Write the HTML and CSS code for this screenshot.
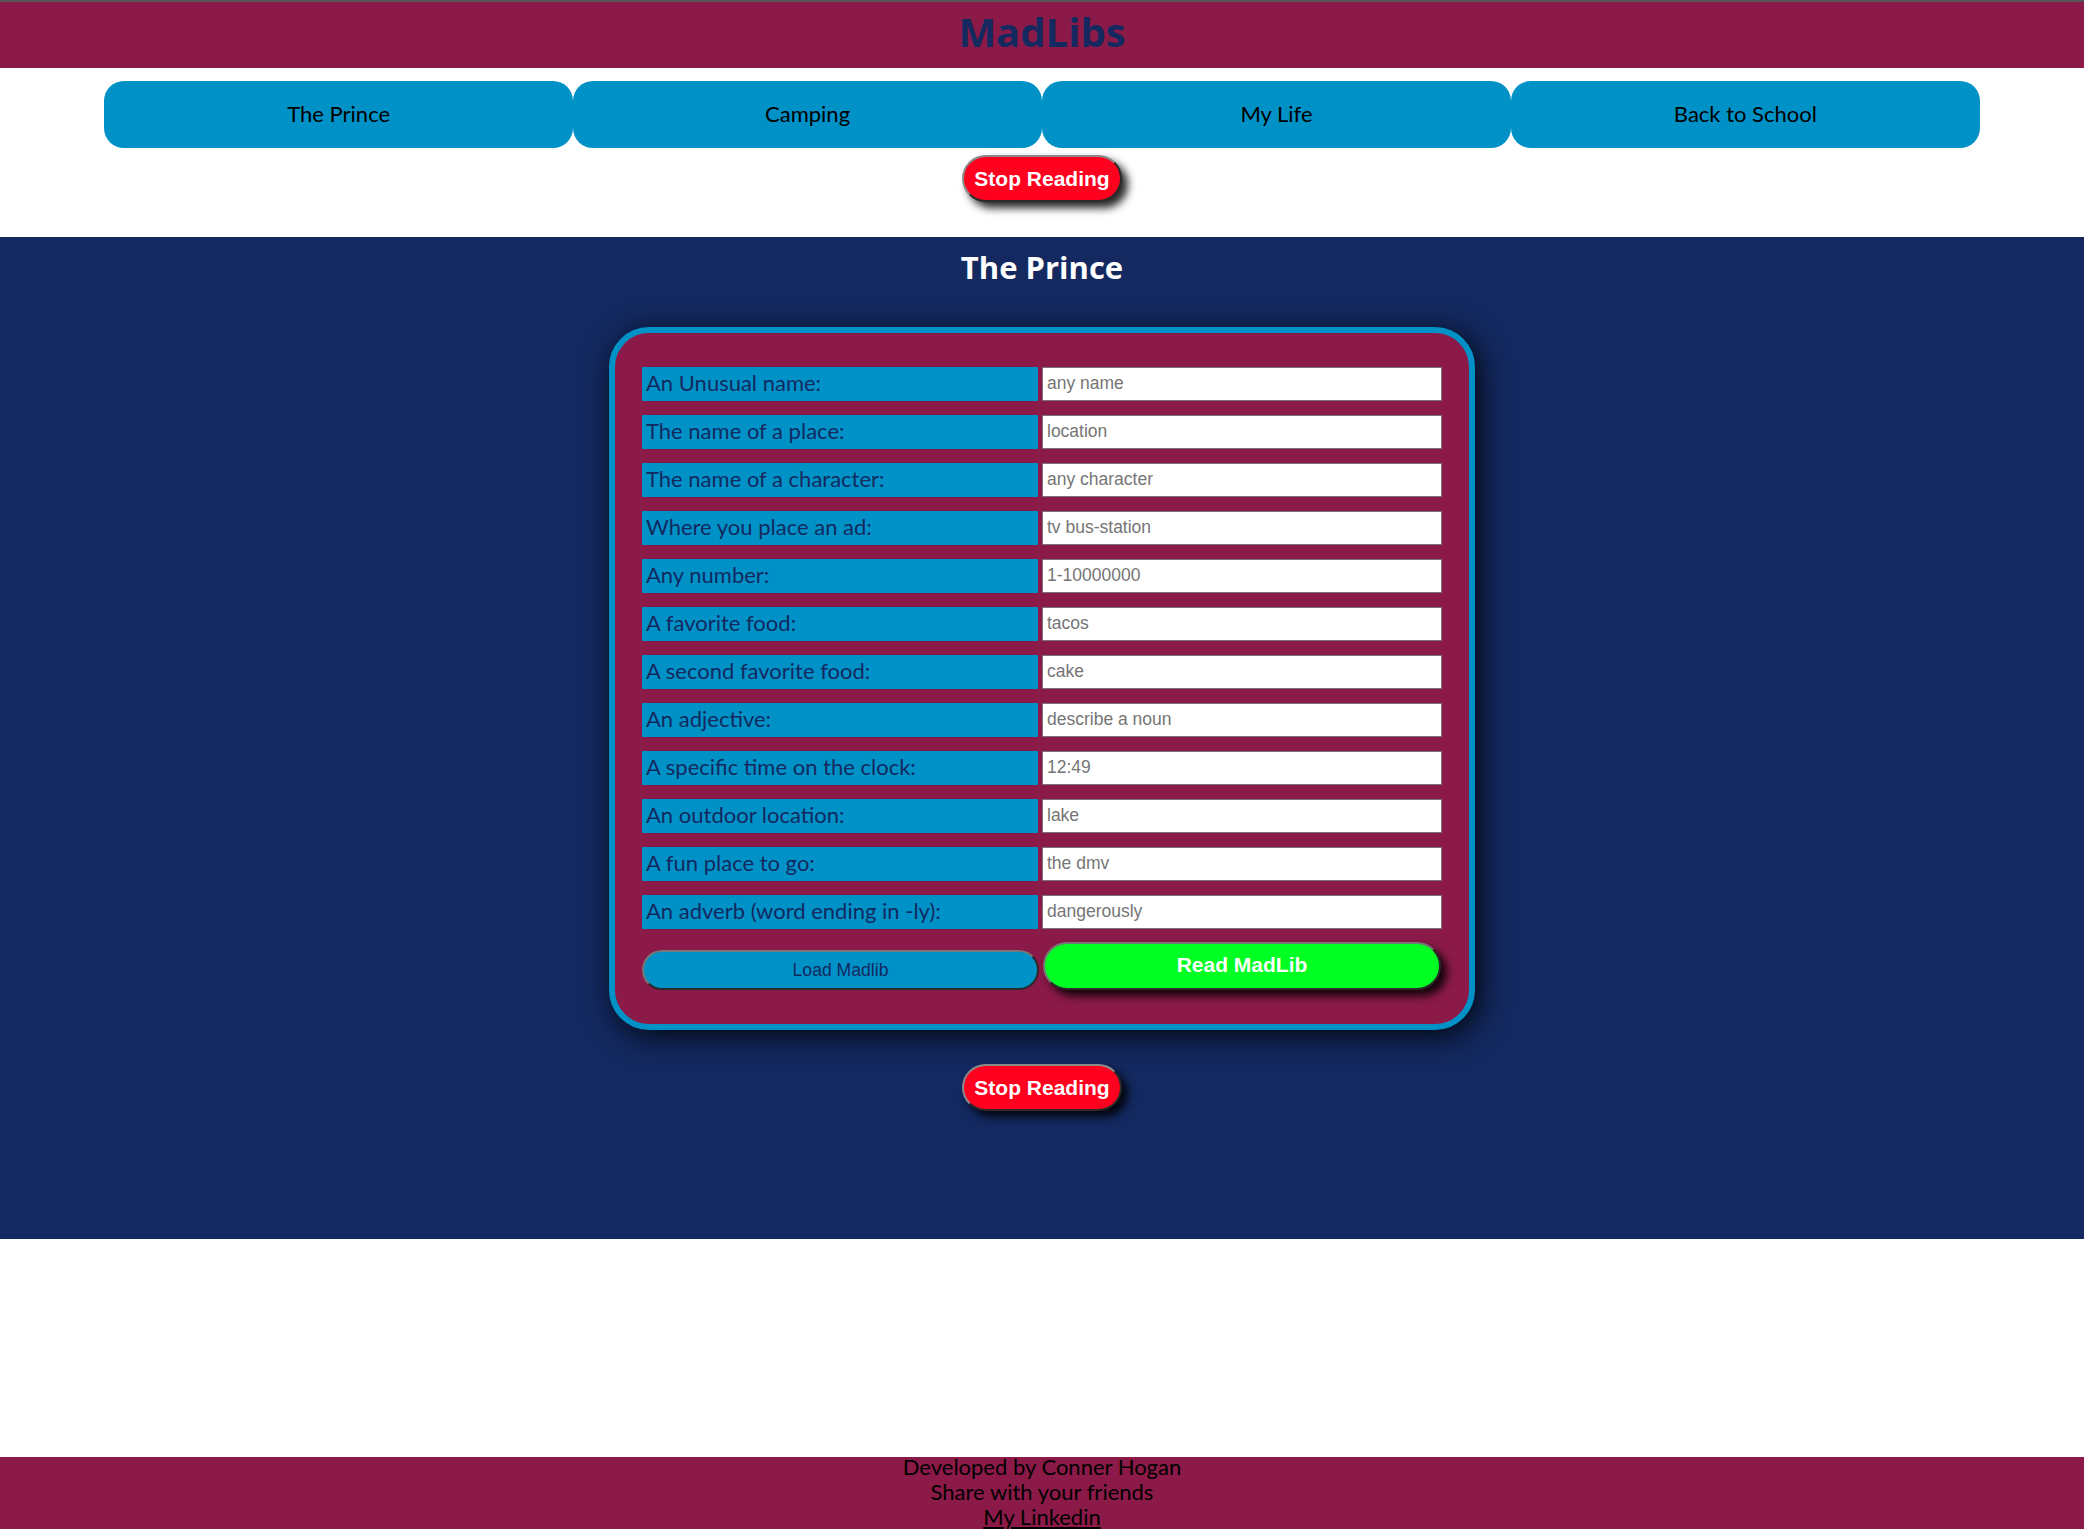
FILE: index.html
```html
<!DOCTYPE html>
<html lang="en">
<head>
<meta charset="utf-8">
<title>MadLibs</title>
<link rel="stylesheet" href="styles.css">
</head>
<body>
<header class="site-header">
  <h1 class="site-title">MadLibs</h1>
</header>
<nav class="story-nav">
  <button class="nav-btn">The Prince</button>
  <button class="nav-btn">Camping</button>
  <button class="nav-btn">My Life</button>
  <button class="nav-btn">Back to School</button>
</nav>
<div class="stop-wrap stop-top">
  <button class="stop-btn">Stop Reading</button>
</div>
<main class="story">
  <h2 class="story-title">The Prince</h2>
  <form class="card">
    <label class="field-label">An Unusual name:</label>
    <input class="field-input" type="text" placeholder="any name">
    <label class="field-label">The name of a place:</label>
    <input class="field-input" type="text" placeholder="location">
    <label class="field-label">The name of a character:</label>
    <input class="field-input" type="text" placeholder="any character">
    <label class="field-label">Where you place an ad:</label>
    <input class="field-input" type="text" placeholder="tv bus-station">
    <label class="field-label">Any number:</label>
    <input class="field-input" type="text" placeholder="1-10000000">
    <label class="field-label">A favorite food:</label>
    <input class="field-input" type="text" placeholder="tacos">
    <label class="field-label">A second favorite food:</label>
    <input class="field-input" type="text" placeholder="cake">
    <label class="field-label">An adjective:</label>
    <input class="field-input" type="text" placeholder="describe a noun">
    <label class="field-label">A specific time on the clock:</label>
    <input class="field-input" type="text" placeholder="12:49">
    <label class="field-label">An outdoor location:</label>
    <input class="field-input" type="text" placeholder="lake">
    <label class="field-label">A fun place to go:</label>
    <input class="field-input" type="text" placeholder="the dmv">
    <label class="field-label">An adverb (word ending in -ly):</label>
    <input class="field-input" type="text" placeholder="dangerously">
    <button class="load-btn" type="button">Load Madlib</button>
    <button class="read-btn" type="button">Read MadLib</button>
  </form>
  <div class="stop-wrap stop-bottom">
    <button class="stop-btn">Stop Reading</button>
  </div>
</main>
<footer class="site-footer">
  <div class="footer-line first-line">Developed by Conner Hogan</div>
  <div class="footer-line">Share with your friends</div>
  <a class="footer-link" href="#">My Linkedin</a>
</footer>
</body>
</html>
```

FILE: styles.css
```css
html, body {
  margin: 0;
  padding: 0;
}
body {
  background: #ffffff;
  font-family: Lato, "Noto Sans", sans-serif;
  border-top: 2px solid #555555;
  overflow: hidden;
}
.site-header {
  background: #8b1a48;
  height: 66px;
  box-sizing: border-box;
  padding-top: 6px;
  text-align: center;
}
.site-title {
  margin: 0;
  font-family: "Open Sans", Lato, sans-serif;
  font-weight: 700;
  font-size: 40px;
  line-height: 48px;
  color: #13295f;
}
.story-nav {
  width: 90%;
  margin: 13px auto 0;
  display: flex;
}
.nav-btn {
  flex: 1;
  height: 67px;
  border: none;
  border-radius: 20px;
  background: #0092c7;
  color: #000000;
  font-family: Lato, "Noto Sans", sans-serif;
  font-size: 22px;
  padding: 0 0 2px;
}
.stop-wrap {
  display: flex;
  justify-content: center;
}
.stop-top {
  padding-top: 7px;
  padding-bottom: 35px;
}
.stop-bottom {
  padding-top: 34px;
  padding-bottom: 128px;
}
.stop-btn {
  height: 47px;
  padding: 0 10px;
  border: 2px solid;
  border-color: #8a8a8a #2a2a2a #2a2a2a #8a8a8a;
  border-radius: 24px;
  background: #ff001e;
  color: #ffffff;
  font-family: "Liberation Sans", Arial, sans-serif;
  font-weight: 700;
  font-size: 21px;
  box-shadow: 6px 6px 9px rgba(0, 0, 0, 0.85);
}
.story {
  background: #132960;
  padding-top: 10px;
}
.story-title {
  margin: 0 0 40px;
  text-align: center;
  color: #ffffff;
  font-family: "Open Sans", Lato, sans-serif;
  font-weight: 700;
  font-size: 31px;
  line-height: 40px;
}
.card {
  width: 800px;
  margin: 0 auto;
  padding: 34px 27px 34px 27px;
  background: #8b1a48;
  border: 6px solid #0092c7;
  border-radius: 40px;
  box-shadow: 5px 6px 30px rgba(0, 0, 0, 0.85);
  display: grid;
  grid-template-columns: 396px 400px;
  column-gap: 4px;
  row-gap: 14px;
  align-items: start;
}
.field-label {
  height: 34px;
  background: #0092c7;
  color: #13295f;
  font-size: 22px;
  line-height: 32px;
  padding-left: 4px;
  box-sizing: border-box;
  white-space: nowrap;
  overflow: hidden;
}
.field-input {
  height: 34px;
  box-sizing: border-box;
  border: 1px solid #767676;
  background: #ffffff;
  padding: 0 4px 1px;
  margin: 0;
  font-family: "Liberation Sans", Arial, sans-serif;
  font-size: 17.5px;
  color: #333333;
}
.field-input::placeholder {
  color: #757575;
}
.load-btn {
  margin-top: 7px;
  height: 40px;
  width: 397px;
  border: 2px solid;
  border-color: #777777 #2a2a2a #2a2a2a #777777;
  border-radius: 20px;
  background: #0092c7;
  color: #13295f;
  font-family: "Liberation Sans", Arial, sans-serif;
  font-size: 17.6px;
  padding: 0;
}
.read-btn {
  margin-top: -1px;
  height: 48px;
  width: 398px;
  justify-self: end;
  margin-right: 1px;
  border: 2px solid;
  border-color: #777777 #2a2a2a #2a2a2a #777777;
  border-radius: 24px;
  background: #00ff22;
  color: #ffffff;
  font-family: "Liberation Sans", Arial, sans-serif;
  font-weight: 700;
  font-size: 21px;
  padding: 0 0 2px;
  box-shadow: 6px 6px 9px rgba(0, 0, 0, 0.85);
}
.site-footer {
  display: flow-root;
  margin-top: 218px;
  background: #8b1a48;
  text-align: center;
  color: #000000;
  font-size: 22px;
  line-height: 25px;
  padding-bottom: 20px;
}
.first-line {
  margin-top: -3px;
}
.footer-link {
  color: #000000;
  text-decoration: underline;
}
```
